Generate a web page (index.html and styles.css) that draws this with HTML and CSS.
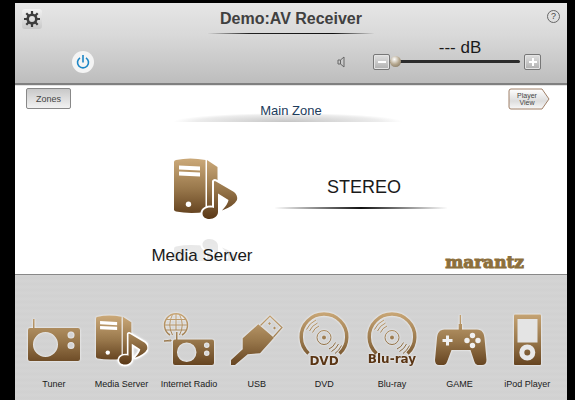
FILE: index.html
```html
<!DOCTYPE html>
<html lang="en">
<head>
    <meta charset="UTF-8">
    <meta name="viewport" content="width=device-width, initial-scale=1.0">
    <title>Demo:AV Receiver</title>
    <link rel="stylesheet" href="styles.css">
</head>
<body>

    <!-- Shared shapes -->
    <svg class="defs" width="0" height="0" aria-hidden="true">
        <defs>
            <linearGradient id="gold" gradientUnits="userSpaceOnUse" x1="0" y1="2" x2="0" y2="60">
                <stop offset="0" stop-color="#c9a777"/>
                <stop offset="0.5" stop-color="#98774b"/>
                <stop offset="1" stop-color="#5c3a18"/>
            </linearGradient>
            <symbol id="server" viewBox="0 0 64 64">
                <path d="M0 4Q0 2.500 2 2Q16 -1 31.500 2V54Q15 56 2 53.500Q0 53 0 51.500Z" fill="url(#gold)"/>
                <path d="M33 2L43.500 9V50L33 54Z" fill="url(#gold)"/>
                <path d="M5 7.500L26 8.500V12.500L5 11.500ZM5 13.500L26 14.500V18.500L5 17.500Z" fill="#fff"/>
                <circle cx="14.500" cy="46.300" r="2.700" fill="#fff"/>
                <path d="M40 23.500Q40.500 22.500 42 23.500L60 34Q64 37.500 63 42Q60 48 48 52.500Q54 46 54.500 42L44 35.500V54C44 58 40 61 35.500 61C31 61 28.500 58.500 28.500 55.500C28.500 51.500 33 48.500 40 50Z" fill="url(#gold)" stroke="#fff" stroke-width="4" paint-order="stroke" stroke-linejoin="round"/>
            </symbol>
            <symbol id="disc" viewBox="0 0 60 60">
                <path d="M14.500 43.500A22.800 22.800 0 1 1 45.500 43.500" fill="none" stroke="url(#gold)" stroke-width="3.500"/>
                <g fill="none" stroke="url(#gold)" stroke-width="1">
                    <circle cx="30" cy="27.500" r="7"/>
                    <path d="M18.500 22.500A12.500 12.500 0 0 1 25 16M15.500 21A16 16 0 0 1 23.500 13M12.500 19.500A19.200 19.200 0 0 1 22 10"/>
                    <path d="M41.500 32.500A12.500 12.500 0 0 1 35 39M44.500 34A16 16 0 0 1 37.500 41.500M47.500 35.500A19.200 19.200 0 0 1 41 43.500"/>
                </g>
                <circle cx="30" cy="27.500" r="2" fill="url(#gold)"/>
            </symbol>
        </defs>
    </svg>

    <div class="app">

        <header class="header">
            <div class="title-row">
                <button class="gear-button" aria-label="Settings">
                    <svg width="16" height="16" viewBox="0 0 16 16">
                        <circle cx="8" cy="8" r="4.300" fill="none" stroke="#3c3c3c" stroke-width="2.600"/>
                        <path d="M8 0V3M8 13V16M0 8H3M13 8H16M2.300 2.300L4.500 4.500M11.500 11.500L13.700 13.700M2.300 13.700L4.500 11.500M11.500 4.500L13.700 2.300" stroke="#3c3c3c" stroke-width="2.200"/>
                    </svg>
                </button>
                <h1>Demo:AV Receiver</h1>
                <button class="help-button" aria-label="Help">?</button>
            </div>

            <div class="control-row">
                <button class="power-button" aria-label="Power">
                    <svg width="14" height="16" viewBox="0 0 14 16">
                        <path d="M4 3.800A5.500 5.500 0 1 0 10 3.800M7 1V8.500" fill="none" stroke="#1c86c6" stroke-width="1.600"/>
                    </svg>
                </button>
                <div class="volume">
                    <button class="mute-button" aria-label="Mute">
                        <svg width="8" height="12" viewBox="0 0 8 12">
                            <path d="M1 4H3.500L7 1V11L3.500 8H1ZM3.500 4V8" fill="none" stroke="#666" stroke-width="1"/>
                        </svg>
                    </button>
                    <button class="step-button" aria-label="Volume down">
                        <svg width="10" height="10" viewBox="0 0 10 10"><path d="M1 5H9" stroke="#fff" stroke-width="2"/></svg>
                    </button>
                    <div class="level">
                        <label for="volume">--- dB</label>
                        <input type="range" id="volume" min="0" max="98" value="0">
                    </div>
                    <button class="step-button" aria-label="Volume up">
                        <svg width="10" height="10" viewBox="0 0 10 10"><path d="M1 5H9M5 1V9" stroke="#fff" stroke-width="2"/></svg>
                    </button>
                </div>
            </div>
        </header>

        <main class="main">
            <div class="zone-row">
                <button class="zones-button">Zones</button>
                <h2>Main Zone</h2>
                <button class="player-button">
                    <svg class="player-shape" width="42" height="22" viewBox="0 0 42 22">
                        <defs>
                            <linearGradient id="silver" x1="0" y1="0" x2="0" y2="1">
                                <stop offset="0" stop-color="#fff"/>
                                <stop offset="0.6" stop-color="#ddd"/>
                                <stop offset="1" stop-color="#f8f8f8"/>
                            </linearGradient>
                        </defs>
                        <path d="M3 1H34L41 11L34 21H3Q1 21 1 19V3Q1 1 3 1Z" fill="url(#silver)" stroke="#a08068" stroke-width="1"/>
                    </svg>
                    <span>Player<br>View</span>
                </button>
            </div>

            <div class="now">
                <div class="source">
                    <svg class="source-icon" width="64" height="64"><use href="#server"/></svg>
                    <svg class="reflection" width="64" height="22" viewBox="0 0 64 22">
                        <g transform="translate(0 61) scale(1 -1)"><use href="#server" width="64" height="64"/></g>
                    </svg>
                    <p>Media Server</p>
                </div>
                <p class="mode">STEREO</p>
                <p class="brand">marantz</p>
            </div>
        </main>

        <nav class="sources">
            <button>
                <svg viewBox="0 0 60 60">
                    <path d="M9 9H10.500V18H54Q56 18 56 20V49Q56 51 54 51H6Q4 51 4 49V20Q4 18 6 18H9ZM21.500 22A12.500 12.500 0 1 0 21.500 47A12.500 12.500 0 1 0 21.500 22ZM47 21.500A3.500 3.500 0 1 0 47 28.500A3.500 3.500 0 1 0 47 21.500ZM47 32A3.500 3.500 0 1 0 47 39A3.500 3.500 0 1 0 47 32Z" fill="url(#gold)" fill-rule="evenodd"/>
                </svg>
                <span>Tuner</span>
            </button>
            <button>
                <svg viewBox="0 0 60 60"><use href="#server" x="5" y="5" width="52" height="52"/></svg>
                <span>Media Server</span>
            </button>
            <button>
                <svg viewBox="0 0 60 60">
                    <g fill="none" stroke="url(#gold)" stroke-width="1">
                        <path d="M11 25A11.500 11.500 0 1 1 23 25" stroke-width="1.500"/>
                        <path d="M13.500 25Q8 15 13.500 4.500M20.500 25Q26 15 20.500 4.500M17 3.500V20M7 9.500H27M5.500 15H28.500M7 20H27"/>
                        <path d="M5 31H12V30Z"/>
                    </g>
                    <path d="M17 22H18.500V29.500H53Q55 29.500 55 31.500V53Q55 55 53 55H16Q14 55 14 53V31.500Q14 29.500 16 29.500H17ZM27.700 32.500A9.700 9.700 0 1 0 27.700 52A9.700 9.700 0 1 0 27.700 32.500ZM47.700 32.500A2.700 2.700 0 1 0 47.700 38A2.700 2.700 0 1 0 47.700 32.500ZM47.700 40.500A2.700 2.700 0 1 0 47.700 46A2.700 2.700 0 1 0 47.700 40.500Z" fill="url(#gold)" fill-rule="evenodd"/>
                </svg>
                <span>Internet Radio</span>
            </button>
            <button>
                <svg viewBox="0 0 60 60">
                    <path d="M4 50L15.700 39.300V28.300L31.300 14.300L47 27.700L33 43.300L20.700 44.300L8 55H4Z" fill="url(#gold)"/>
                    <path d="M33.500 15.500L43 6L55 17.500L46.500 27" fill="none" stroke="url(#gold)" stroke-width="1.200"/>
                    <path d="M41 13.500L42.500 12L44 13.500L42.500 15ZM46 18L47.500 16.500L49 18L47.500 19.500Z" fill="url(#gold)"/>
                </svg>
                <span>USB</span>
            </button>
            <button>
                <svg viewBox="0 0 60 60">
                    <use href="#disc" width="60" height="60"/>
                    <text class="disc-name" x="30" y="55">DVD</text>
                </svg>
                <span>DVD</span>
            </button>
            <button>
                <svg viewBox="0 0 60 60">
                    <use href="#disc" width="60" height="60"/>
                    <text class="disc-name" x="30" y="53">Blu-ray</text>
                </svg>
                <span>Blu-ray</span>
            </button>
            <button>
                <svg viewBox="0 0 60 60">
                    <path d="M29.700 5H31V14H32V19.500H47C52 19.500 54 23 54.500 28L56.500 50Q56.500 55 52 55H47.500Q45.500 55 44.500 52L40.500 40H21.500L17 52Q16 55 14 55H9Q5 55 5 50L7 28C7.500 23 9.500 19.500 14.500 19.500H28.700V14H29.700Z" fill="url(#gold)"/>
                    <path d="M17.500 25.500V35.500M12.500 30.500H22.500" stroke="#f0f0f0" stroke-width="3"/>
                    <g fill="#f0f0f0"><circle cx="42.500" cy="25.500" r="2.700"/><circle cx="37" cy="30.500" r="2.700"/><circle cx="48" cy="30.500" r="2.700"/><circle cx="42.500" cy="35.500" r="2.700"/></g>
                </svg>
                <span>GAME</span>
            </button>
            <button>
                <svg viewBox="0 0 60 60">
                    <rect x="17" y="4.500" width="27" height="50.500" rx="1" fill="url(#gold)"/>
                    <rect x="20.500" y="9" width="20" height="23.500" fill="#e4e4e4"/>
                    <circle cx="30.300" cy="42.500" r="5.500" fill="none" stroke="#e8e8e8" stroke-width="5"/>
                </svg>
                <span>iPod Player</span>
            </button>
        </nav>

    </div>

</body>
</html>
```

FILE: styles.css
```css
* {
    box-sizing: border-box;
}

body {
    margin: 0;
    padding: 3px 8px 0 15px;
    background-color: #000;
    color: #1a1a1a;
    font-family: "Liberation Sans", Arial, sans-serif;
}

h1, h2, p {
    margin: 0;
    font-weight: normal;
}

button {
    margin: 0;
    padding: 0;
    border: none;
    background: none;
    color: inherit;
    font-family: inherit;
    cursor: pointer;
}

svg {
    display: block;
}

.defs {
    position: absolute;
}

.app {
    display: flex;
    flex-direction: column;
    min-height: calc(100vh - 3px);
    background-color: #fff;
}

/* Header */
.header {
    padding: 6px 7px 13px;
    border-bottom: 2px solid #808080;
    background: linear-gradient(#e6e6e6, #d9d9d9 40%, #bdbdbd);
}

.title-row {
    display: grid;
    grid-template-columns: 1fr auto 1fr;
    align-items: start;
}

.title-row h1 {
    padding: 0 12px 4px;
    border-bottom: 1px solid;
    border-image: linear-gradient(to right, transparent, #222 25%, #111 75%, transparent) 1;
    color: #404040;
    font-size: 16px;
    font-weight: bold;
    line-height: 20px;
}

.gear-button {
    display: flex;
    align-items: center;
    justify-content: center;
    width: 20px;
    height: 20px;
    border-radius: 3px;
    background: linear-gradient(#f2f2f2, #c8c8c8);
}

.help-button {
    justify-self: end;
    width: 13px;
    height: 13px;
    margin-top: 1px;
    border: 1px solid #666;
    border-radius: 50%;
    color: #444;
    font-size: 9px;
    line-height: 11px;
}

.control-row {
    display: flex;
    justify-content: space-between;
    align-items: flex-end;
    margin-top: 4px;
    padding: 0 19px 0 50px;
}

.power-button {
    display: flex;
    align-items: center;
    justify-content: center;
    width: 22px;
    height: 22px;
    margin-bottom: -3px;
    border-radius: 50%;
    background-color: #f4f4f4;
}

.volume {
    display: flex;
    align-items: flex-end;
}

.mute-button {
    margin: 0 28px 2px 0;
}

.step-button {
    display: flex;
    align-items: center;
    justify-content: center;
    width: 17px;
    height: 16px;
    border: 1px solid #777;
    border-radius: 2px;
    background: linear-gradient(#e0e0e0, #b0b0b0);
    box-shadow: inset 0 0 0 1px #e4e4e4;
}

.level {
    width: 134px;
    text-align: center;
}

.level label {
    display: block;
    padding: 4px 0 0 6px;
    font-size: 17px;
    line-height: 12px;
}

.level input {
    display: block;
    width: 130px;
    height: 14px;
    margin: 0 0 2px;
    background: none;
    appearance: none;
}

.level input::-webkit-slider-runnable-track {
    height: 3px;
    border-radius: 2px;
    background-color: #2c2c2c;
}

.level input::-webkit-slider-thumb {
    width: 11px;
    height: 11px;
    margin-top: -4px;
    border-radius: 50%;
    background: radial-gradient(circle at 40% 30%, #fff, #b5a78e 50%, #776b58);
    appearance: none;
}

/* Main zone */
.main {
    display: flex;
    flex: 1;
    flex-direction: column;
    border-top: 1px solid #e4e4e4;
}

.zone-row {
    display: grid;
    grid-template-columns: 1fr 230px 1fr;
    align-items: start;
    padding: 2px 17px 0 11px;
}

.zones-button {
    width: 45px;
    height: 21px;
    border: 1px solid #888;
    border-radius: 2px;
    background: linear-gradient(#c8c8c8, #f2f2f2);
    color: #444;
    font-size: 9px;
}

.zone-row h2 {
    padding: 15px 0 3px 6px;
    background: radial-gradient(ellipse 50% 9px at 50% 100%, #c4c4c4, #ececec 80%, transparent) no-repeat;
    color: #1c3c5c;
    font-size: 13px;
    line-height: 16px;
    text-align: center;
}

.player-button {
    display: grid;
    justify-self: end;
    align-items: center;
    color: #444;
    font-size: 7px;
    line-height: 7px;
}

.player-button > * {
    grid-area: 1 / 1;
}

.player-button span {
    padding-right: 4px;
}

.now {
    display: grid;
    flex: 1;
    grid-template-columns: 122px 172px 1fr;
    column-gap: 12px;
    padding: 36px 43px 4px 126px;
}

.source {
    position: relative;
    display: flex;
    flex-direction: column;
    align-items: center;
    font-size: 17px;
    line-height: 20px;
    white-space: nowrap;
}

.source-icon {
    margin-left: 8px;
}

.source p {
    margin-top: 24px;
    z-index: 1;
}

.reflection {
    position: absolute;
    top: 81px;
    margin-left: 8px;
    opacity: 0.12;
    filter: grayscale(1);
}

.mode {
    grid-area: 1 / 2;
    align-self: start;
    margin-top: 18px;
    padding: 0 0 9px 6px;
    border-bottom: 2px solid;
    border-image: linear-gradient(to right, transparent, #111 50%, transparent) 1;
    font-size: 18px;
    line-height: 22px;
    text-align: center;
}

.brand {
    grid-area: 1 / 2 / 2 / 4;
    align-self: end;
    justify-self: end;
    color: #8c6f3c;
    font-family: "DejaVu Serif", serif;
    font-size: 17px;
    font-weight: bold;
    line-height: 16px;
    -webkit-text-stroke: 1px #8c6f3c;
}

/* Source bar */
.sources {
    display: grid;
    grid-template-columns: repeat(8, 1fr);
    padding: 35px 6px 10px 5px;
    border-top: 1px solid #888;
    background: repeating-linear-gradient(#d4d4d4, #d1d1d1 3px, #d4d4d4 6px);
}

.sources button {
    display: flex;
    flex-direction: column;
    align-items: center;
    gap: 8px;
    font-size: 9px;
    line-height: 12px;
    white-space: nowrap;
}

.sources svg {
    width: 60px;
    height: 60px;
    filter: drop-shadow(0 0 1px #fff);
}

.disc-name {
    fill: #5a3514;
    font-family: "DejaVu Sans", sans-serif;
    font-size: 12px;
    font-weight: bold;
    text-anchor: middle;
}
```
